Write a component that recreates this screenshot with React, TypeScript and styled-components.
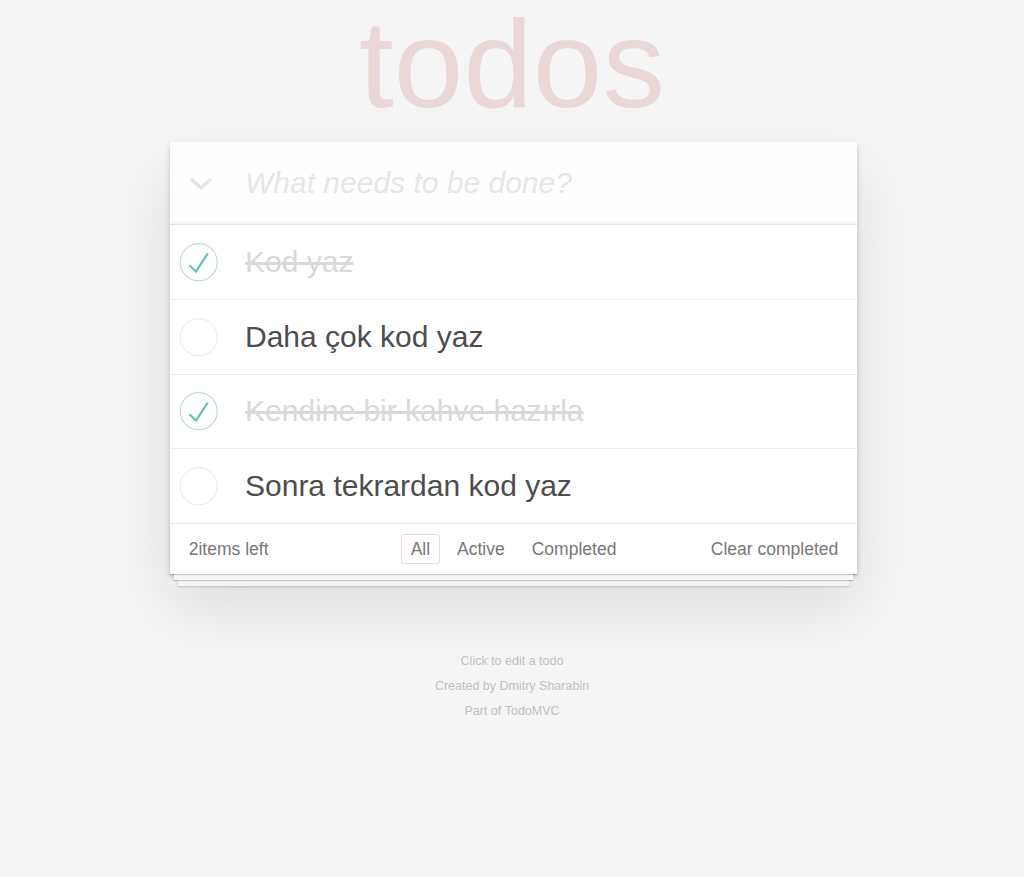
import React, { useState } from "react";
import styled, { createGlobalStyle } from "styled-components";

const GlobalStyle = createGlobalStyle`
  html, body { margin: 0; padding: 0; }
  body {
    background: #f5f5f5;
    color: #4d4d4d;
    font: 300 17.5px/24.5px "Liberation Sans", Arial, Helvetica, sans-serif;
    -webkit-font-smoothing: antialiased;
  }
  * { box-sizing: border-box; }
`;

const Page = styled.div`
  min-height: 877px;
`;

const Title = styled.h1`
  margin: 0;
  height: 142px;
  padding-top: 1px;
  font-size: 125px;
  line-height: 125px;
  font-weight: 100;
  text-align: center;
  color: rgba(175, 47, 47, 0.15);
`;

const AppBox = styled.section`
  width: 687px;
  margin-left: calc(50% - 342px);
  background: #fff;
  box-shadow: 0 2.5px 5px 0 rgba(0, 0, 0, 0.2), 0 31px 62px 0 rgba(0, 0, 0, 0.1);
`;

const Header = styled.header`
  display: flex;
  align-items: center;
  height: 82px;
  background: rgba(0, 0, 0, 0.003);
  box-shadow: inset 0 -2.5px 1.25px rgba(0, 0, 0, 0.03);
`;

const ToggleAll = styled.button`
  flex: none;
  width: 60px;
  height: 82px;
  padding: 0 0 0 1px;
  border: 0;
  background: none;
  display: flex;
  align-items: center;
  justify-content: center;
  cursor: pointer;
  svg { display: block; }
`;

const NewTodo = styled.input`
  flex: 1;
  min-width: 0;
  height: 82px;
  border: 0;
  margin: 0;
  padding: 20px 20px 20px 15px;
  background: transparent;
  font-family: inherit;
  font-size: 30px;
  line-height: 42px;
  font-weight: 300;
  color: inherit;
  outline: none;
  &::placeholder {
    font-style: italic;
    font-weight: 300;
    color: #e6e6e6;
  }
`;

const List = styled.ul`
  margin: 0;
  padding: 0;
  list-style: none;
  border-top: 1px solid #e6e6e6;
`;

const Item = styled.li`
  display: flex;
  align-items: center;
  border-bottom: 1px solid #ededed;
  &:last-child { border-bottom: none; }
`;

const Toggle = styled.button`
  flex: none;
  width: 50px;
  height: 50px;
  padding: 0;
  margin: 0;
  border: 0;
  background: none;
  cursor: pointer;
  svg { display: block; }
`;

const Label = styled.label<{ $done: boolean }>`
  flex: 1;
  display: block;
  padding: 18.75px 18.75px 18.75px 25px;
  font-size: 30px;
  line-height: 36.25px;
  font-weight: 400;
  word-break: break-all;
  color: ${(p) => (p.$done ? "#d9d9d9" : "#4d4d4d")};
  text-decoration: ${(p) => (p.$done ? "line-through" : "none")};
`;

const Footer = styled.footer`
  display: grid;
  grid-template-columns: 1fr auto 1fr;
  grid-template-rows: 50px;
  align-items: center;
  height: 51px;
  padding: 0 18.75px;
  border-top: 1px solid #e6e6e6;
  color: #777;
  background: #fff;
  box-shadow: 0 1px 1px rgba(0, 0, 0, 0.2), 0 10px 0 -4px #f6f6f6,
    0 11px 1px -4px rgba(0, 0, 0, 0.2), 0 20px 0 -8px #f6f6f6,
    0 21px 2px -8px rgba(0, 0, 0, 0.2);
`;

const Count = styled.span`
  justify-self: start;
  line-height: 25px;
`;

const Filters = styled.ul`
  display: flex;
  margin: 0;
  padding: 0;
  list-style: none;
`;

const FilterLink = styled.a<{ $selected: boolean }>`
  display: inline-block;
  margin: 0 3.75px;
  padding: 3.75px 8.75px;
  border: 1px solid ${(p) => (p.$selected ? "rgba(175, 47, 47, 0.2)" : "transparent")};
  border-radius: 3px;
  line-height: 20.5px;
  color: inherit;
  text-decoration: none;
  cursor: pointer;
  &:hover {
    border-color: ${(p) => (p.$selected ? "rgba(175, 47, 47, 0.2)" : "rgba(175, 47, 47, 0.1)")};
  }
`;

const ClearButton = styled.button`
  justify-self: end;
  margin: 0;
  padding: 0;
  border: 0;
  background: none;
  font: inherit;
  line-height: 25px;
  color: inherit;
  cursor: pointer;
  &:hover { text-decoration: underline; }
`;

const Info = styled.footer`
  margin-top: 81px;
  color: #bfbfbf;
  font-size: 12.5px;
  line-height: 12.5px;
  text-align: center;
  text-shadow: 0 1px 0 rgba(255, 255, 255, 0.5);
  p { margin: 0 0 12.5px; }
  a { color: inherit; text-decoration: none; font-weight: 400; }
`;

const ChevronIcon = () => (
  <svg width="24" height="14" viewBox="0 0 24 14">
    <path d="M2 3 L12 12 L22 3" fill="none" stroke="#e6e6e6" strokeWidth="3.2" />
  </svg>
);

const CheckIcon = ({ done }: { done: boolean }) => (
  <svg width="50" height="50" viewBox="-10 -18 100 135">
    <circle cx="50" cy="50" r="50" fill="none" stroke={done ? "#bddad5" : "#ededed"} strokeWidth="3" />
    {done && <path fill="#5dc2af" d="M72 25L42 71 27 56l-4 4 20 20 34-52z" />}
  </svg>
);

type Todo = { id: number; title: string; done: boolean };
type Filter = "all" | "active" | "completed";

export default function App() {
  const [todos, setTodos] = useState<Todo[]>([
    { id: 1, title: "Kod yaz", done: true },
    { id: 2, title: "Daha çok kod yaz", done: false },
    { id: 3, title: "Kendine bir kahve hazırla", done: true },
    { id: 4, title: "Sonra tekrardan kod yaz", done: false },
  ]);
  const [filter, setFilter] = useState<Filter>("all");
  const [text, setText] = useState("");

  const active = todos.filter((t) => !t.done).length;
  const shown = todos.filter((t) =>
    filter === "all" ? true : filter === "active" ? !t.done : t.done
  );

  const toggle = (id: number) =>
    setTodos((ts) => ts.map((t) => (t.id === id ? { ...t, done: !t.done } : t)));

  const toggleAll = () => {
    const allDone = todos.every((t) => t.done);
    setTodos((ts) => ts.map((t) => ({ ...t, done: !allDone })));
  };

  const onKey = (e: React.KeyboardEvent<HTMLInputElement>) => {
    if (e.key === "Enter" && text.trim()) {
      setTodos((ts) => [...ts, { id: Date.now(), title: text.trim(), done: false }]);
      setText("");
    }
  };

  const filters: { key: Filter; label: string }[] = [
    { key: "all", label: "All" },
    { key: "active", label: "Active" },
    { key: "completed", label: "Completed" },
  ];

  return (
    <Page>
      <GlobalStyle />
      <Title>todos</Title>
      <AppBox>
        <Header>
          <ToggleAll onClick={toggleAll} aria-label="Mark all as complete">
            <ChevronIcon />
          </ToggleAll>
          <NewTodo
            placeholder="What needs to be done?"
            value={text}
            onChange={(e) => setText(e.target.value)}
            onKeyDown={onKey}
          />
        </Header>
        <List>
          {shown.map((t) => (
            <Item key={t.id}>
              <Toggle onClick={() => toggle(t.id)} aria-label="Toggle">
                <CheckIcon done={t.done} />
              </Toggle>
              <Label $done={t.done}>{t.title}</Label>
            </Item>
          ))}
        </List>
        <Footer>
          <Count>{active}items left</Count>
          <Filters>
            {filters.map((f) => (
              <li key={f.key}>
                <FilterLink $selected={filter === f.key} onClick={() => setFilter(f.key)}>
                  {f.label}
                </FilterLink>
              </li>
            ))}
          </Filters>
          <ClearButton onClick={() => setTodos((ts) => ts.filter((t) => !t.done))}>
            Clear completed
          </ClearButton>
        </Footer>
      </AppBox>
      <Info>
        <p>Click to edit a todo</p>
        <p>
          Created by <a href="#">Dmitry Sharabin</a>
        </p>
        <p>
          Part of <a href="#">TodoMVC</a>
        </p>
      </Info>
    </Page>
  );
}
